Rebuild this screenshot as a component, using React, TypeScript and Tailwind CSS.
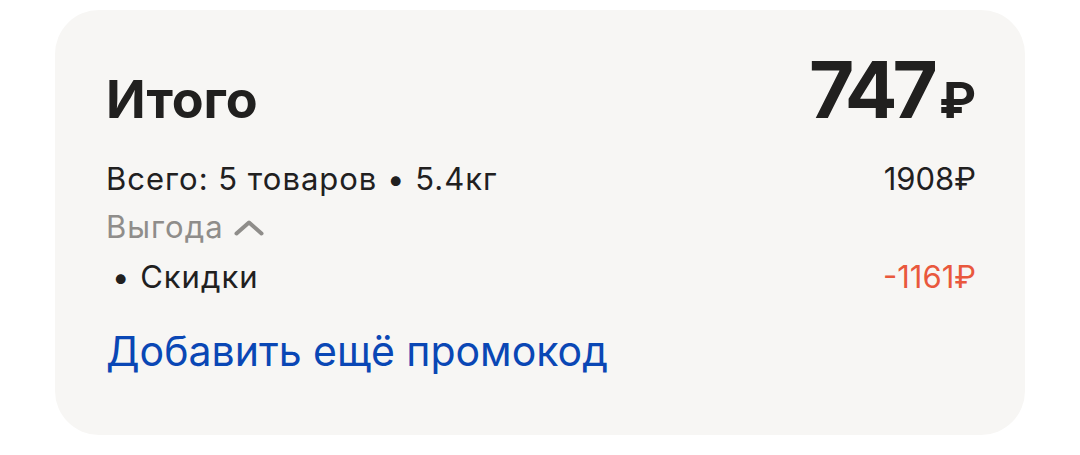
import React from "react";

export default function App() {
  return (
    <div className="w-[1080px] h-[455px] bg-white pt-[10px]" style={{ fontFamily: 'Inter, "Noto Sans", sans-serif' }}>
      <div className="ml-[55px] w-[970px] h-[425px] rounded-[44px] bg-[#f7f6f4] pl-[51px] pr-[49px] pt-[40px]">
        <div className="flex items-baseline justify-between">
          <div className="text-[52px] font-bold text-[#21201f] leading-[80px]">Итого</div>
          <div className="flex items-baseline text-[#21201f] font-bold leading-[80px]">
            <span className="text-[78px] tracking-[-5px]">747</span>
            <span className="text-[50px] ml-[6px]">₽</span>
          </div>
        </div>
        <div className="mt-[15px] flex justify-between text-[31px] leading-[48px] text-[#21201f]">
          <span className="tracking-[1px]">Всего: 5 товаров • 5.4кг</span>
          <span>1908₽</span>
        </div>
        <div className="flex items-center text-[31px] leading-[48px] text-[#8f8d8a]">
          <span className="tracking-[1px]">Выгода</span>
          <svg className="ml-[10px] mt-[2px]" width="30" height="16" viewBox="0 0 30 16" fill="none">
            <path d="M2.5 13.5 L15 2.5 L27.5 13.5" stroke="#8f8d8a" strokeWidth="4" strokeLinecap="round" strokeLinejoin="round" />
          </svg>
        </div>
        <div className="flex justify-between text-[31px] leading-[52px] text-[#21201f]">
          <span className="pl-[6px] tracking-[1px]">• Скидки</span>
          <span className="text-[#e9583d]">-1161₽</span>
        </div>
        <div className="mt-[24px] text-[41px] leading-[48px] text-[#0a47b5]">Добавить ещё промокод</div>
      </div>
    </div>
  );
}
